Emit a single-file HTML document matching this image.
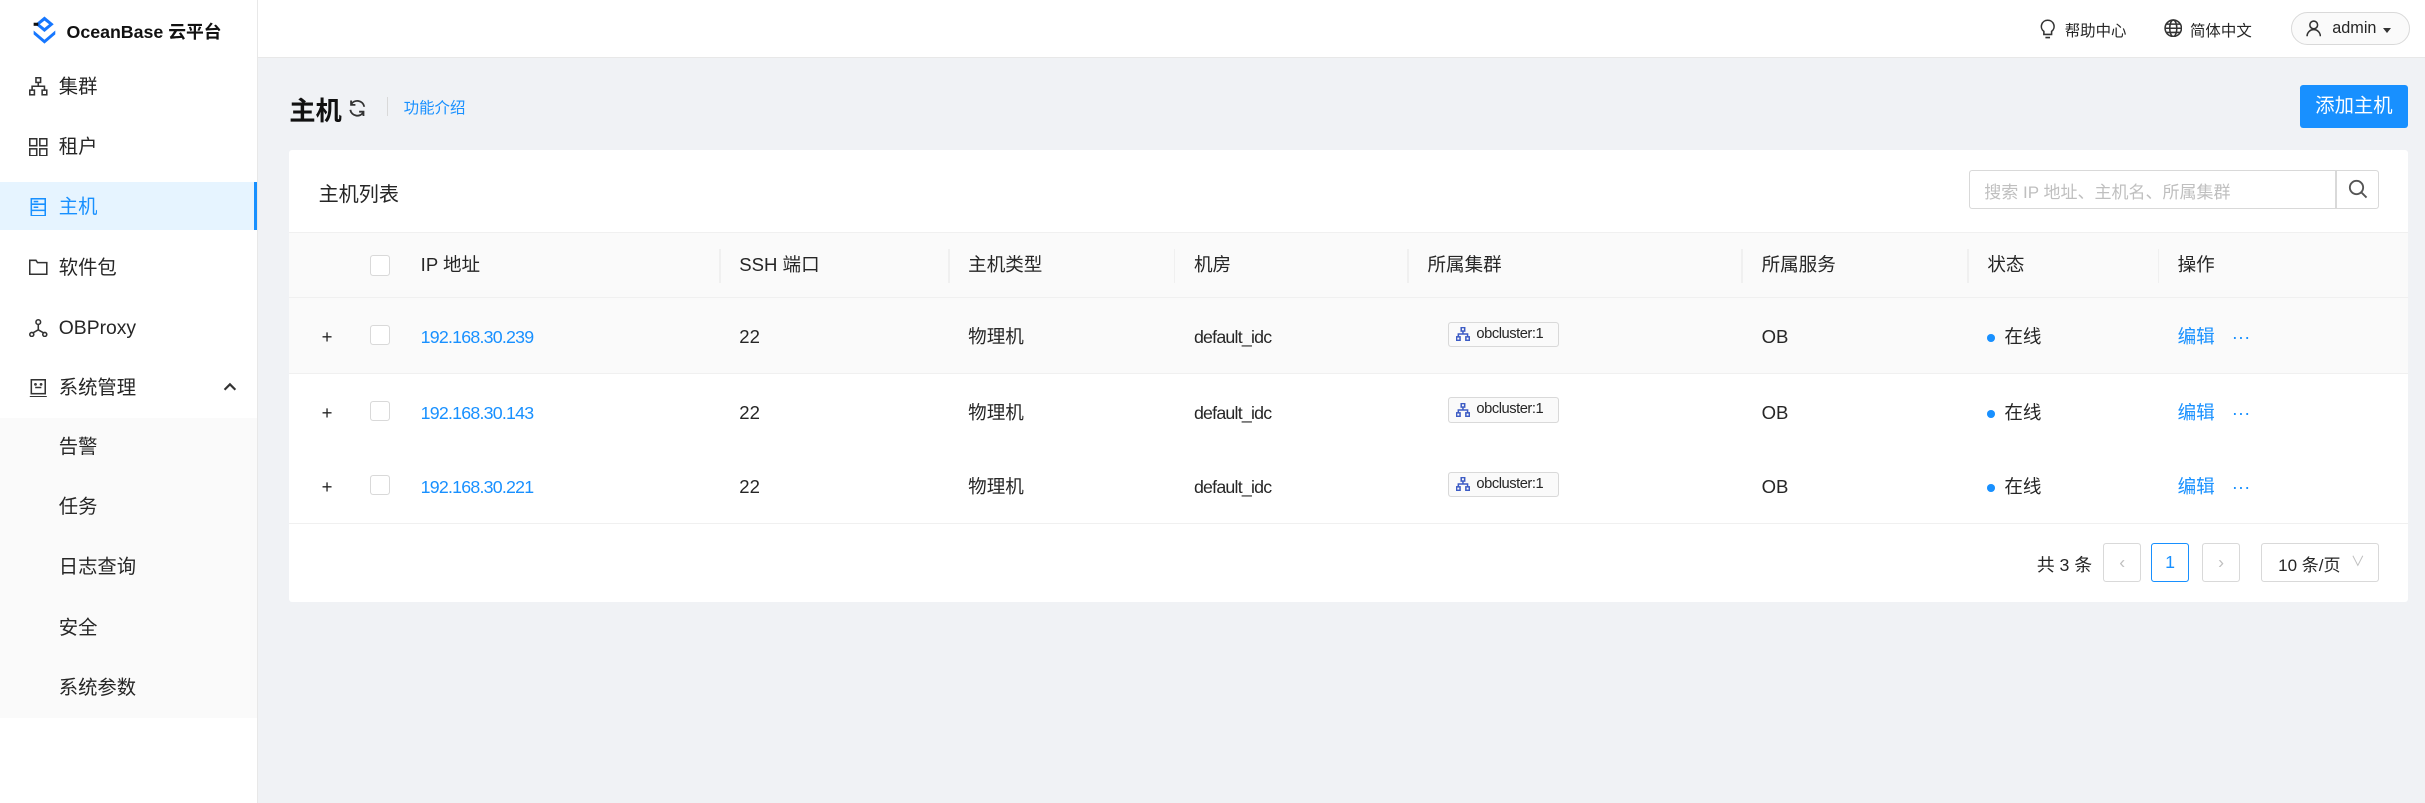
<!DOCTYPE html>
<html><head><meta charset="utf-8"><style>
html,body{margin:0;padding:0;overflow:hidden}
body{width:1568px;height:519px;zoom:1.5466;background:#f0f2f5;font-family:"Liberation Sans","Noto Sans CJK SC",sans-serif;color:#262626;position:relative;font-size:12px}
.a{position:absolute;white-space:nowrap}
#side{position:absolute;left:0;top:0;width:166px;height:519px;background:#fff;border-right:1px solid #e8e8e8}
#hdr{position:absolute;left:167px;top:0;right:0;height:37px;background:#fff;border-bottom:1px solid #e8e8e8}
.mi{position:absolute;left:0;width:166px;height:31px;line-height:33px;font-size:12.5px;color:#262626}
.mi span{position:absolute;left:38px}
.mi svg{position:absolute;left:19px;top:10px}
.sub{position:absolute;left:0;width:166px;height:39px;line-height:39px;font-size:12.5px}
.sub span{position:absolute;left:38px}
.th{position:absolute;top:150px;height:43px;line-height:43px;font-size:12px;color:#262626}
.dv{position:absolute;top:161px;width:1px;height:22px;background:#f0f0f0}
.row{position:absolute;left:187px;width:1370px;height:48px;border-bottom:1px solid #f0f0f0;background:#fff}
.c{position:absolute;top:1px;line-height:48px;font-size:12px}
.ip{letter-spacing:-0.5px;font-size:11.5px}
.cb{position:absolute;width:12px;height:12px;border:1px solid #d9d9d9;border-radius:2px;background:#fff}
.tag{position:absolute;top:15px;left:749px;height:15px;width:71px;border:1px solid #d9d9d9;border-radius:2px;background:#fafafa;font-size:9.5px;line-height:15px;letter-spacing:-0.3px}
.pg{position:absolute;top:351px;width:23px;height:24px;border:1px solid #d9d9d9;border-radius:2px;background:#fff;text-align:center;line-height:24px;color:#bfbfbf;font-size:11.5px}
</style></head><body>
<div id="side">
 <svg class="a" style="left:19px;top:10px" width="20" height="20" viewBox="0 0 20 20"><path d="M10 1 L16 6 L10 11 L4 6Z" fill="#1677ff"/><path d="M7 6 L10 3.6 L13 6 L10 8.4Z" fill="#fff"/><path d="M3 10 L10 16 L17 10 L17 12.5 L10 18.5 L3 12.5Z" fill="#1677ff"/><rect x="3" y="5" width="3" height="2" fill="#111"/></svg>
 <div class="a" style="left:43px;top:11px;font-size:11.5px;font-weight:bold;color:#111;line-height:20px">OceanBase 云平台</div>
 <div class="mi" style="top:40px"><svg width="12" height="12" viewBox="0 0 12 12" fill="none" stroke="#333"><rect x="4.5" y=".5" width="3" height="3"/><rect x=".5" y="8.5" width="3" height="3"/><rect x="8.5" y="8.5" width="3" height="3"/><path d="M6 3.5V6M2 8.5V6H10V8.5"/></svg><span>集群</span></div>
 <div class="mi" style="top:79px"><svg width="12" height="12" viewBox="0 0 12 12" fill="none" stroke="#333"><rect x=".5" y=".5" width="4.5" height="4.5"/><rect x="7" y=".5" width="4.5" height="4.5"/><rect x=".5" y="7" width="4.5" height="4.5"/><rect x="7" y="7" width="4.5" height="4.5"/></svg><span>租户</span></div>
 <div class="mi" style="top:118px;background:#e6f4ff;color:#1890ff;border-right:2px solid #1890ff;width:164px"><svg width="12" height="12" viewBox="0 0 12 12" fill="none" stroke="#1890ff"><rect x="1.5" y=".5" width="9" height="11"/><path d="M1.5 4H10.5M1.5 8H10.5M3 2.3H6M3 6H6"/></svg><span>主机</span></div>
 <div class="mi" style="top:157px"><svg width="12" height="12" viewBox="0 0 12 12" fill="none" stroke="#333"><path d="M.5 1.5H4.5L5.5 3H11.5V10.5H.5Z"/></svg><span>软件包</span></div>
 <div class="mi" style="top:196px"><svg width="12" height="12" viewBox="0 0 12 12" fill="none" stroke="#333"><circle cx="6" cy="2" r="1.5"/><circle cx="1.8" cy="10" r="1.3"/><circle cx="10.2" cy="10" r="1.3"/><path d="M6 3.5V7L2.5 9M6 7L9.5 9"/></svg><span>OBProxy</span></div>
 <div class="mi" style="top:235px"><svg width="12" height="12" viewBox="0 0 12 12" fill="none" stroke="#333"><rect x="1.5" y=".5" width="9" height="9"/><path d="M.5 11.5H11.5M4 5.5H8"/><circle cx="4.2" cy="3.5" r=".4"/><circle cx="7.8" cy="3.5" r=".4"/></svg><span>系统管理</span>
  <svg style="left:144px;top:12px" width="9" height="6" viewBox="0 0 9 6" fill="none" stroke="#333" stroke-width="1.4"><path d="M1 5L4.5 1.5L8 5"/></svg></div>
 <div class="a" style="left:0;top:270px;width:166px;height:194px;background:#fafafa">
  <div class="sub" style="top:0"><span>告警</span></div>
  <div class="sub" style="top:39px"><span>任务</span></div>
  <div class="sub" style="top:78px"><span>日志查询</span></div>
  <div class="sub" style="top:117px"><span>安全</span></div>
  <div class="sub" style="top:156px"><span>系统参数</span></div>
 </div>
</div>
<div id="hdr">
 <svg class="a" style="left:1152px;top:12px" width="10" height="13" viewBox="0 0 10 13" fill="none" stroke="#333"><path d="M5 .8A4 4 0 0 0 2.5 8V10H7.5V8A4 4 0 0 0 5 .8ZM3.5 12H6.5"/></svg>
 <div class="a" style="left:1168px;top:12px;font-size:10px">帮助中心</div>
 <svg class="a" style="left:1232px;top:12px" width="12" height="12" viewBox="0 0 12 12" fill="none" stroke="#333"><circle cx="6" cy="6" r="5.3"/><ellipse cx="6" cy="6" rx="2.3" ry="5.3"/><path d="M.7 6H11.3M1.5 3.3H10.5M1.5 8.7H10.5"/></svg>
 <div class="a" style="left:1249px;top:12px;font-size:10px">简体中文</div>
 <div class="a" style="left:1314px;top:8px;width:76px;height:20px;border:1px solid #d9d9d9;border-radius:11px;background:#fafafa"></div>
 <svg class="a" style="left:1324px;top:13px" width="10" height="11" viewBox="0 0 10 11" fill="none" stroke="#333"><circle cx="5" cy="3.2" r="2.5"/><path d="M.7 10.5A4.3 4.3 0 0 1 9.3 10.5"/></svg>
 <div class="a" style="left:1341px;top:12px;font-size:10.5px">admin</div>
 <div class="a" style="left:1374px;top:18px;width:0;height:0;border-left:3px solid transparent;border-right:3px solid transparent;border-top:3.5px solid #333"></div>
</div>
<div class="a" style="left:187px;top:58px;font-size:17px;font-weight:bold;color:#111">主机</div>
<svg class="a" style="left:225px;top:64px" width="12" height="12" viewBox="0 0 12 12" fill="none" stroke="#333" stroke-width="1.2"><path d="M10.5 5A4.6 4.6 0 0 0 2 3.5M1.5 7A4.6 4.6 0 0 0 10 8.5"/><path d="M2 1V3.8H4.8M10 11V8.2H7.2"/></svg>
<div class="a" style="left:250px;top:63px;width:1px;height:12px;background:#d9d9d9"></div>
<div class="a" style="left:261px;top:62px;font-size:10px;color:#1890ff">功能介绍</div>
<div class="a" style="left:1487px;top:55px;width:70px;height:28px;background:#1890ff;border-radius:2px;color:#fff;font-size:12.5px;line-height:28px;text-align:center">添加主机</div>
<div class="a" style="left:187px;top:97px;width:1370px;height:292px;background:#fff;border-radius:2px"></div>
<div class="a" style="left:206px;top:115px;font-size:13px;color:#262626">主机列表</div>
<div class="a" style="left:1273px;top:110px;width:237px;height:24px;border:1px solid #d9d9d9;border-radius:2px 0 0 2px"></div>
<div class="a" style="left:1283px;top:115px;font-size:11px;color:#bfbfbf">搜索 IP 地址、主机名、所属集群</div>
<div class="a" style="left:1510px;top:110px;width:27px;height:24px;border:1px solid #d9d9d9;border-radius:0 2px 2px 0"></div>
<svg class="a" style="left:1518px;top:116px" width="13" height="13" viewBox="0 0 13 13" fill="none" stroke="#555" stroke-width="1.2"><circle cx="5.5" cy="5.5" r="4.3"/><path d="M8.6 8.6L12 12"/></svg>
<div class="a" style="left:187px;top:150px;width:1370px;height:43px;background:#fafafa;border-top:1px solid #f0f0f0;border-bottom:1px solid #f0f0f0;box-sizing:border-box"></div>
<div class="cb" style="left:239px;top:165px"></div>
<div class="th" style="left:272px">IP 地址</div>
<div class="dv" style="left:465px"></div><div class="th" style="left:478px">SSH 端口</div>
<div class="dv" style="left:613px"></div><div class="th" style="left:626px">主机类型</div>
<div class="dv" style="left:759px"></div><div class="th" style="left:772px">机房</div>
<div class="dv" style="left:910px"></div><div class="th" style="left:923px">所属集群</div>
<div class="dv" style="left:1126px"></div><div class="th" style="left:1139px">所属服务</div>
<div class="dv" style="left:1272px"></div><div class="th" style="left:1285px">状态</div>
<div class="dv" style="left:1395px"></div><div class="th" style="left:1408px">操作</div>

<div class="row" style="top:193px;background:#fafafa">
 <div class="c" style="left:21px">+</div><div class="cb" style="left:52px;top:17px"></div>
 <div class="c ip" style="left:85px;color:#1890ff">192.168.30.239</div><div class="c" style="left:291px">22</div><div class="c" style="left:439px">物理机</div><div class="c ip" style="left:585px">default_idc</div>
 <div class="tag"><svg style="position:absolute;left:5px;top:3px" width="9" height="9" viewBox="0 0 12 12" fill="none" stroke="#3c5bc4" stroke-width="1.3"><rect x="4.5" y=".5" width="3" height="3"/><rect x=".5" y="8.5" width="3" height="3"/><rect x="8.5" y="8.5" width="3" height="3"/><path d="M6 3.5V6M2 8.5V6H10V8.5"/></svg><span style="position:absolute;left:18px">obcluster:1</span></div>
 <div class="c" style="left:952px">OB</div><div class="a" style="left:1098px;top:23px;width:5px;height:5px;border-radius:50%;background:#1890ff"></div><div class="c" style="left:1109px">在线</div><div class="c" style="left:1221px;color:#1890ff">编辑</div><div class="c" style="left:1256px;color:#1890ff">···</div>
</div>
<div class="row" style="top:242px">
 <div class="c" style="left:21px">+</div><div class="cb" style="left:52px;top:17px"></div>
 <div class="c ip" style="left:85px;color:#1890ff">192.168.30.143</div><div class="c" style="left:291px">22</div><div class="c" style="left:439px">物理机</div><div class="c ip" style="left:585px">default_idc</div>
 <div class="tag"><svg style="position:absolute;left:5px;top:3px" width="9" height="9" viewBox="0 0 12 12" fill="none" stroke="#3c5bc4" stroke-width="1.3"><rect x="4.5" y=".5" width="3" height="3"/><rect x=".5" y="8.5" width="3" height="3"/><rect x="8.5" y="8.5" width="3" height="3"/><path d="M6 3.5V6M2 8.5V6H10V8.5"/></svg><span style="position:absolute;left:18px">obcluster:1</span></div>
 <div class="c" style="left:952px">OB</div><div class="a" style="left:1098px;top:23px;width:5px;height:5px;border-radius:50%;background:#1890ff"></div><div class="c" style="left:1109px">在线</div><div class="c" style="left:1221px;color:#1890ff">编辑</div><div class="c" style="left:1256px;color:#1890ff">···</div>
</div>
<div class="row" style="top:290px">
 <div class="c" style="left:21px">+</div><div class="cb" style="left:52px;top:17px"></div>
 <div class="c ip" style="left:85px;color:#1890ff">192.168.30.221</div><div class="c" style="left:291px">22</div><div class="c" style="left:439px">物理机</div><div class="c ip" style="left:585px">default_idc</div>
 <div class="tag"><svg style="position:absolute;left:5px;top:3px" width="9" height="9" viewBox="0 0 12 12" fill="none" stroke="#3c5bc4" stroke-width="1.3"><rect x="4.5" y=".5" width="3" height="3"/><rect x=".5" y="8.5" width="3" height="3"/><rect x="8.5" y="8.5" width="3" height="3"/><path d="M6 3.5V6M2 8.5V6H10V8.5"/></svg><span style="position:absolute;left:18px">obcluster:1</span></div>
 <div class="c" style="left:952px">OB</div><div class="a" style="left:1098px;top:23px;width:5px;height:5px;border-radius:50%;background:#1890ff"></div><div class="c" style="left:1109px">在线</div><div class="c" style="left:1221px;color:#1890ff">编辑</div><div class="c" style="left:1256px;color:#1890ff">···</div>
</div>

<div class="a" style="left:1317px;top:356px;font-size:11.5px">共 3 条</div>
<div class="pg" style="left:1360px">‹</div>
<div class="pg" style="left:1391px;border-color:#1890ff;color:#1890ff">1</div>
<div class="pg" style="left:1424px">›</div>
<div class="a" style="left:1462px;top:351px;width:75px;height:24px;border:1px solid #d9d9d9;border-radius:2px;background:#fff"></div>
<div class="a" style="left:1473px;top:356px;font-size:11px">10 条/页</div>
<div class="a" style="left:1520px;top:356px;font-size:9px;color:#bfbfbf">∨</div>
</body></html>
